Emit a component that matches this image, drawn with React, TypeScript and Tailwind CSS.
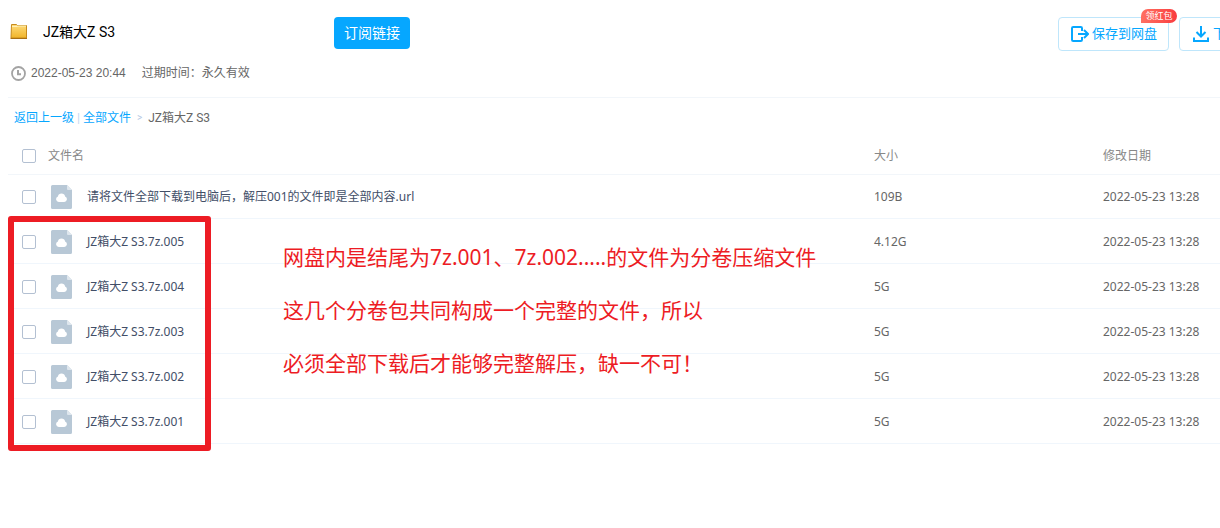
interface FileEntry {
  name: string;
  size: string;
  date: string;
}

const FILES: FileEntry[] = [
  { name: '请将文件全部下载到电脑后，解压001的文件即是全部内容.url', size: '109B', date: '2022-05-23 13:28' },
  { name: 'JZ箱大Z S3.7z.005', size: '4.12G', date: '2022-05-23 13:28' },
  { name: 'JZ箱大Z S3.7z.004', size: '5G', date: '2022-05-23 13:28' },
  { name: 'JZ箱大Z S3.7z.003', size: '5G', date: '2022-05-23 13:28' },
  { name: 'JZ箱大Z S3.7z.002', size: '5G', date: '2022-05-23 13:28' },
  { name: 'JZ箱大Z S3.7z.001', size: '5G', date: '2022-05-23 13:28' },
];

const NOTES = [
  '网盘内是结尾为7z.001、7z.002.....的文件为分卷压缩文件',
  '这几个分卷包共同构成一个完整的文件，所以',
  '必须全部下载后才能够完整解压，缺一不可！',
];

const CHECKBOX =
  'h-[14px] w-[14px] shrink-0 appearance-none rounded-[2px] border border-[#b3c0d2] bg-white checked:bg-[#06a7ff]';

function FolderIcon() {
  return (
    <svg width="17" height="16" viewBox="0 0 17 16" className="shrink-0" aria-hidden="true">
      <defs>
        <linearGradient id="folder" x1="0" y1="0" x2="0" y2="1">
          <stop offset="0" stopColor="#ffdc7c" />
          <stop offset="1" stopColor="#f0b429" />
        </linearGradient>
      </defs>
      <path d="M1.500.5H6.500l1 1h9v12.500H1z" fill="url(#folder)" stroke="#c68a1c" />
      <path d="M2 2.500h5l1-.5h8" fill="none" stroke="#fff1b8" />
      <path d="M.5 14.500H17" stroke="#a86f14" />
    </svg>
  );
}

function ClockIcon() {
  return (
    <svg width="16" height="16" viewBox="0 0 16 16" fill="none" stroke="#a3a3a3" strokeWidth="2" aria-hidden="true">
      <circle cx="8.500" cy="8.500" r="6.500" strokeWidth="1.800" />
      <path d="M8 5v4.200h3" />
    </svg>
  );
}

function SaveIcon() {
  return (
    <svg width="18" height="16" viewBox="0 0 18 16" fill="none" stroke="#06a7ff" strokeWidth="2" aria-hidden="true">
      <path d="M11 5V2.200Q11 1 9.800 1H2.200Q1 1 1 2.200V13.800Q1 15 2.200 15H9.800Q11 15 11 13.800V11" />
      <path d="M7 8h10M13 4l4 4-4 4" />
    </svg>
  );
}

function DownloadIcon() {
  return (
    <svg width="16" height="16" viewBox="0 0 16 16" fill="none" stroke="#06a7ff" strokeWidth="2" aria-hidden="true">
      <path d="M8 0v10M3.500 6 8 10.500 12.500 6M1 11.500V15h14v-3.500" />
    </svg>
  );
}

function FileIcon() {
  return (
    <svg width="21" height="24" viewBox="0 0 21 24" className="shrink-0" aria-hidden="true">
      <path d="M1.500 0H16l5 5v17.500a1.500 1.500 0 0 1-1.500 1.500h-18A1.500 1.500 0 0 1 0 22.500v-21A1.500 1.500 0 0 1 1.500 0z" fill="#b8c8d6" />
      <path d="M16 0l5 5h-4a1 1 0 0 1-1-1z" fill="#dfe7ee" />
      <path d="M7.800 17a2.900 2.900 0 0 1-.9-5.600 3.700 3.700 0 0 1 7.200 0A2.900 2.900 0 0 1 13.200 17z" fill="#fff" />
    </svg>
  );
}

function FileRow({ file, first }: { file: FileEntry; first: boolean }) {
  const cell = `border-b border-[#f0f6fc] p-0 ${first ? 'h-11' : 'h-[45px] pt-0.5'}`;

  return (
    <tr>
      <td className={`${cell} text-[#424e67]`}>
        <label className="flex items-center pl-[14px]">
          <input type="checkbox" className={CHECKBOX} />
          <span className="mx-[15px]">
            <FileIcon />
          </span>
          {file.name}
        </label>
      </td>
      <td className={cell}>{file.size}</td>
      <td className={`${cell} whitespace-nowrap`}>{file.date}</td>
    </tr>
  );
}

export default function App() {
  return (
    <div className="overflow-hidden bg-white pb-20 pl-2 font-['Roboto','Noto_Sans_CJK_SC',sans-serif] text-xs text-[#666]">
      <header className="border-b border-[#f2f6fa]">
        <div className="flex h-[60px] items-start pt-[17px]">
          <div className="flex h-[30px] w-[326px] items-center gap-4 pl-[2px]">
            <FolderIcon />
            <h1 className="text-sm text-black">JZ箱大Z S3</h1>
          </div>
          <button className="h-8 w-[76px] rounded bg-[#06a7ff] text-sm text-white">订阅链接</button>
          <div className="ml-auto flex w-[162px] shrink-0 gap-[10px] text-[13px] text-[#06a7ff]">
            <button className="relative flex h-[34px] w-[111px] shrink-0 items-center gap-[3px] rounded border border-[#bfe6fb] pl-3">
              <SaveIcon />
              保存到网盘
              <span className="absolute -top-[9px] -right-[9px] h-[14px] w-[36px] rounded-[7px] rounded-bl-none bg-linear-to-r from-[#ff6f62] to-[#f93a3f] text-center text-[9px] leading-[14px] text-white">
                领红包
              </span>
            </button>
            <button className="flex h-[34px] w-[76px] shrink-0 items-center gap-1 rounded border border-[#bfe6fb] pl-[13px]">
              <DownloadIcon />
              下载
            </button>
          </div>
        </div>
        <div className="flex h-[37px] items-start pt-[5px] pl-[2px] font-['Liberation_Sans','Noto_Sans_CJK_SC',sans-serif] leading-4">
          <ClockIcon />
          <span className="ml-[5px]">2022-05-23 20:44</span>
          <span className="ml-4">过期时间：永久有效</span>
        </div>
      </header>

      <nav className="flex h-[39px] items-center pl-[6px]">
        <a href="#back" className="text-[#06a7ff]">返回上一级</a>
        <span className="mx-[3px] text-[#c4d8f0]">|</span>
        <a href="#all" className="text-[#06a7ff]">全部文件</a>
        <span className="mx-[6px] text-[10px] text-[#b4c8e4]">&gt;</span>
        <span>JZ箱大Z S3</span>
      </nav>

      <div className="relative font-['Noto_Sans','Noto_Sans_CJK_SC',sans-serif]">
        <table className="w-full table-fixed border-separate border-spacing-0 text-left">
          <thead>
            <tr className="text-[#888]">
              <th className="h-[38px] border-b border-[#f2f6fa] p-0 font-normal">
                <label className="flex items-center gap-3 pl-[14px]">
                  <input type="checkbox" className={CHECKBOX} />
                  文件名
                </label>
              </th>
              <th className="w-[229px] border-b border-[#f2f6fa] p-0 font-normal">大小</th>
              <th className="w-[117px] border-b border-[#f2f6fa] p-0 font-normal">修改日期</th>
            </tr>
          </thead>
          <tbody>
            {FILES.map((file, i) => (
              <FileRow key={file.name} file={file} first={i === 0} />
            ))}
          </tbody>
        </table>

        {/* Highlight around the split archive parts */}
        <div className="pointer-events-none absolute top-[79px] left-0 h-[235px] w-[203px] rounded-[3px] border-[6px] border-[#ed1c24]" />
        <div className="pointer-events-none absolute top-[94px] left-[275px] text-[21px] leading-[53px] whitespace-nowrap text-[#ed1c24]">
          {NOTES.map((note) => (
            <p key={note}>{note}</p>
          ))}
        </div>
      </div>
    </div>
  );
}
